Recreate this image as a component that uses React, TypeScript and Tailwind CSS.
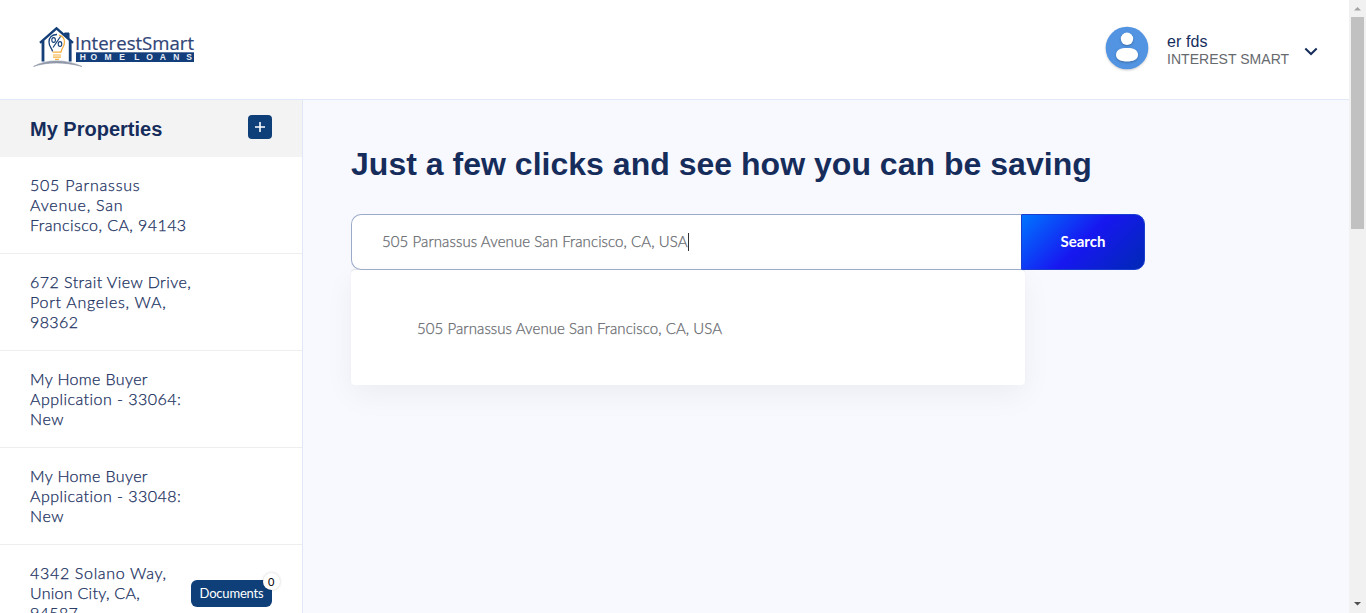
import React from "react";

type Line = { text: string; tracking: string };

const properties: Line[][] = [
  [
    { text: "505 Parnassus", tracking: "tracking-[0.78px]" },
    { text: "Avenue, San", tracking: "tracking-[0.78px]" },
    { text: "Francisco, CA, 94143", tracking: "tracking-[0.43px]" },
  ],
  [
    { text: "672 Strait View Drive,", tracking: "tracking-[0.45px]" },
    { text: "Port Angeles, WA,", tracking: "tracking-[0.72px]" },
    { text: "98362", tracking: "tracking-[0.4px]" },
  ],
  [
    { text: "My Home Buyer", tracking: "tracking-[0.36px]" },
    { text: "Application - 33064:", tracking: "tracking-[0.46px]" },
    { text: "New", tracking: "tracking-[0.6px]" },
  ],
  [
    { text: "My Home Buyer", tracking: "tracking-[0.36px]" },
    { text: "Application - 33048:", tracking: "tracking-[0.46px]" },
    { text: "New", tracking: "tracking-[0.6px]" },
  ],
  [
    { text: "4342 Solano Way,", tracking: "tracking-[0.68px]" },
    { text: "Union City, CA,", tracking: "tracking-[0.28px]" },
    { text: "94587", tracking: "tracking-[0.35px]" },
  ],
];

function Logo() {
  return (
    <svg width="162" height="44" viewBox="0 0 162 44" role="img" aria-label="InterestSmart Home Loans">
      <path d="M0.5 41.5C13 34 33 34 49 41.5C32 36.8 14 36.8 0.5 41.5Z" fill="#8f97a8" stroke="#8f97a8" strokeWidth="0.6" />
      <path d="M7 17.8L23.5 3.3L40 17.8" fill="none" stroke="#143f78" strokeWidth="2.4" />
      <path d="M31.5 9V8H36V13.5Z" fill="#143f78" stroke="#143f78" />
      <path d="M10 15.5V36.5M37.2 15.5V36.5" stroke="#143f78" strokeWidth="2.8" />
      <path d="M19.5 26.5C19 23 16 22 16 17C16 12.5 19 9.5 24 9.5" fill="none" stroke="#143f78" strokeWidth="1.3" />
      <path d="M26 10.1C29.5 11 31.5 13.5 31.5 17C31.5 22 28.3 23 28 27.2H19.7" fill="none" stroke="#f3b03f" strokeWidth="1.3" />
      <path d="M20 30H28M20 32.2H28M22 34.3H26" stroke="#f3b03f" strokeWidth="1.2" />
      <path d="M27.5 11.5L20 22.5" stroke="#143f78" strokeWidth="1.2" />
      <ellipse cx="20.6" cy="15" rx="1.8" ry="2.4" fill="none" stroke="#143f78" strokeWidth="1.1" />
      <ellipse cx="27" cy="19" rx="1.8" ry="2.4" fill="none" stroke="#143f78" strokeWidth="1.1" />
      <text x="42" y="25.3" fontSize="19" textLength="119" lengthAdjust="spacingAndGlyphs" fill="#304578" stroke="#304578" strokeWidth="0.2" fontFamily="Open Sans, sans-serif">InterestSmart</text>
      <rect x="43" y="27.3" width="118" height="9.7" fill="#123f7b" />
      <text x="46.7 57.5 71.5 86.2 96 101.2 113.3 126.8 140.3 153.2" y="35.1" fontSize="8.5" fontWeight="700" fill="#e8edf5" fontFamily="Liberation Sans, sans-serif">HOME LOANS</text>
    </svg>
  );
}

function Avatar() {
  return (
    <svg width="46" height="48" viewBox="0 0 46 48" className="drop-shadow-[0_1px_1px_#0003]">
      <circle cx="23" cy="23" r="21.3" fill="#5294e2" />
      <g fill="#fff" className="drop-shadow-[0_1px_1px_#0004]">
        <circle cx="23" cy="13.8" r="6.2" />
        <path d="M12 30C12 24.8 16.5 23 23 23S34 24.8 34 30C34 34.5 29 36.5 23 36.5S12 34.5 12 30Z" />
      </g>
    </svg>
  );
}

export default function App() {
  return (
    <div className="flex h-[613px] w-full overflow-hidden bg-white font-['Lato',sans-serif] text-[#162d5c]">
      <div className="flex min-w-0 flex-1 flex-col">
        <header className="flex h-[100px] shrink-0 justify-between border-b border-[#e0e9f8] bg-white">
          <div className="pt-[25px] pl-[33px]">
            <Logo />
          </div>
          <div className="flex items-start pt-[25px] pr-[31px] font-['Liberation_Sans',sans-serif]">
            <Avatar />
            <div className="ml-[17px] w-[122px] pt-[7px] whitespace-nowrap">
              <div className="text-base leading-[19px] tracking-[0.12px]">er fds</div>
              <div className="text-sm leading-4 tracking-[0.04px] text-[#66696e]">INTEREST SMART</div>
            </div>
            <svg width="14" height="9" viewBox="0 0 14 9" className="mt-[22px] ml-[15px]">
              <path d="M1.3 1.5L7 7L12.7 1.5" fill="none" stroke="#162d5c" strokeWidth="2" />
            </svg>
          </div>
        </header>
        <div className="flex min-h-0 flex-1">
          <aside className="flex w-[303px] shrink-0 flex-col border-r border-[#e0e8f7] bg-white">
            <div className="flex h-[57px] shrink-0 items-start justify-between bg-[#f3f3f3] pr-[30px] pl-[30px]">
              <h2 className="pt-[17px] font-['Liberation_Sans',sans-serif] text-[20px] leading-6 font-bold">My Properties</h2>
              <button className="mt-[15px] flex size-6 items-center justify-center rounded bg-[#0e3f78]">
                <svg width="12" height="12" viewBox="0 0 12 12">
                  <path d="M6 1V11M1 6H11" stroke="#fff" strokeWidth="1.6" />
                </svg>
              </button>
            </div>
            {properties.map((lines, i) => (
              <div key={i} className="flex h-[97px] shrink-0 items-start justify-between border-b border-[#eceef0] pt-[18px] pr-[30px] pl-[30px]">
                <div className="text-base leading-5 font-light whitespace-nowrap [-webkit-text-stroke:0.25px_#162d5c]">
                  {lines.map((l) => (
                    <div key={l.text}>
                      <span className={l.tracking}>{l.text}</span>
                    </div>
                  ))}
                </div>
                {i === 4 && (
                  <button className="relative mt-[17px] h-[27px] w-[81px] rounded-md bg-[#0e3f78] text-[13px] leading-[27px] tracking-[-0.2px] text-white">
                    Documents
                    <span className="absolute -top-[7px] -right-[7.5px] flex size-[17px] items-center justify-center rounded-full bg-white pb-px text-[11px] leading-none text-black shadow-[0_0_3px_#0003]">0</span>
                  </button>
                )}
              </div>
            ))}
          </aside>
          <main className="flex-1 bg-[#f8f9ff] pt-[44px] pl-12">
            <h1 className="font-['Liberation_Sans',sans-serif] text-[32px] leading-10 font-bold tracking-[0.02px] whitespace-nowrap">
              Just a few clicks and see how you can be saving
            </h1>
            <div className="mt-[30px] flex h-14 w-[794px]">
              <div className="flex w-[670px] items-center rounded-l-[10px] border border-r-0 border-[#9aaac8] bg-linear-to-b from-white from-80% to-[#fcfcfd] pb-px pl-[30px] text-[15px] font-light text-[#66696e]">
                <span className="tracking-[0.09px] whitespace-nowrap [-webkit-text-stroke:0.25px_#66696e]">505 Parnassus Avenue San Francisco, CA, USA</span>
                <span className="h-[18px] w-px bg-[#333]" />
              </div>
              <button className="w-[124px] rounded-r-[10px] border border-[#1a3ed0] bg-[linear-gradient(135deg,#0075ff_0%,#1717f0_50%,#0029b5_100%)] pb-0.5 text-[15px] font-bold text-white">
                Search
              </button>
            </div>
            <div className="flex h-[115px] w-[674px] items-center rounded bg-white pt-0.5 pl-[66px] text-[15px] font-light text-[#66696e] shadow-[0_10px_30px_#0000000d,0_-1px_1px_#00000018]">
              <span className="tracking-[0.08px] whitespace-nowrap [-webkit-text-stroke:0.25px_#66696e]">505 Parnassus Avenue San Francisco, CA, USA</span>
            </div>
          </main>
        </div>
      </div>
      <div className="flex w-[17px] shrink-0 flex-col items-center justify-between bg-[#f1f1f1]">
        <div className="flex flex-col items-center">
          <svg width="17" height="17" viewBox="0 0 17 17">
            <path d="M5 10.5L8.5 7L12 10.5Z" fill="#a3a3a3" />
          </svg>
          <div className="h-[212px] w-[13px] bg-[#c1c1c1]" />
        </div>
        <svg width="17" height="17" viewBox="0 0 17 17">
          <path d="M5 6L8.5 9.5L12 6Z" fill="#505050" />
        </svg>
      </div>
    </div>
  );
}
